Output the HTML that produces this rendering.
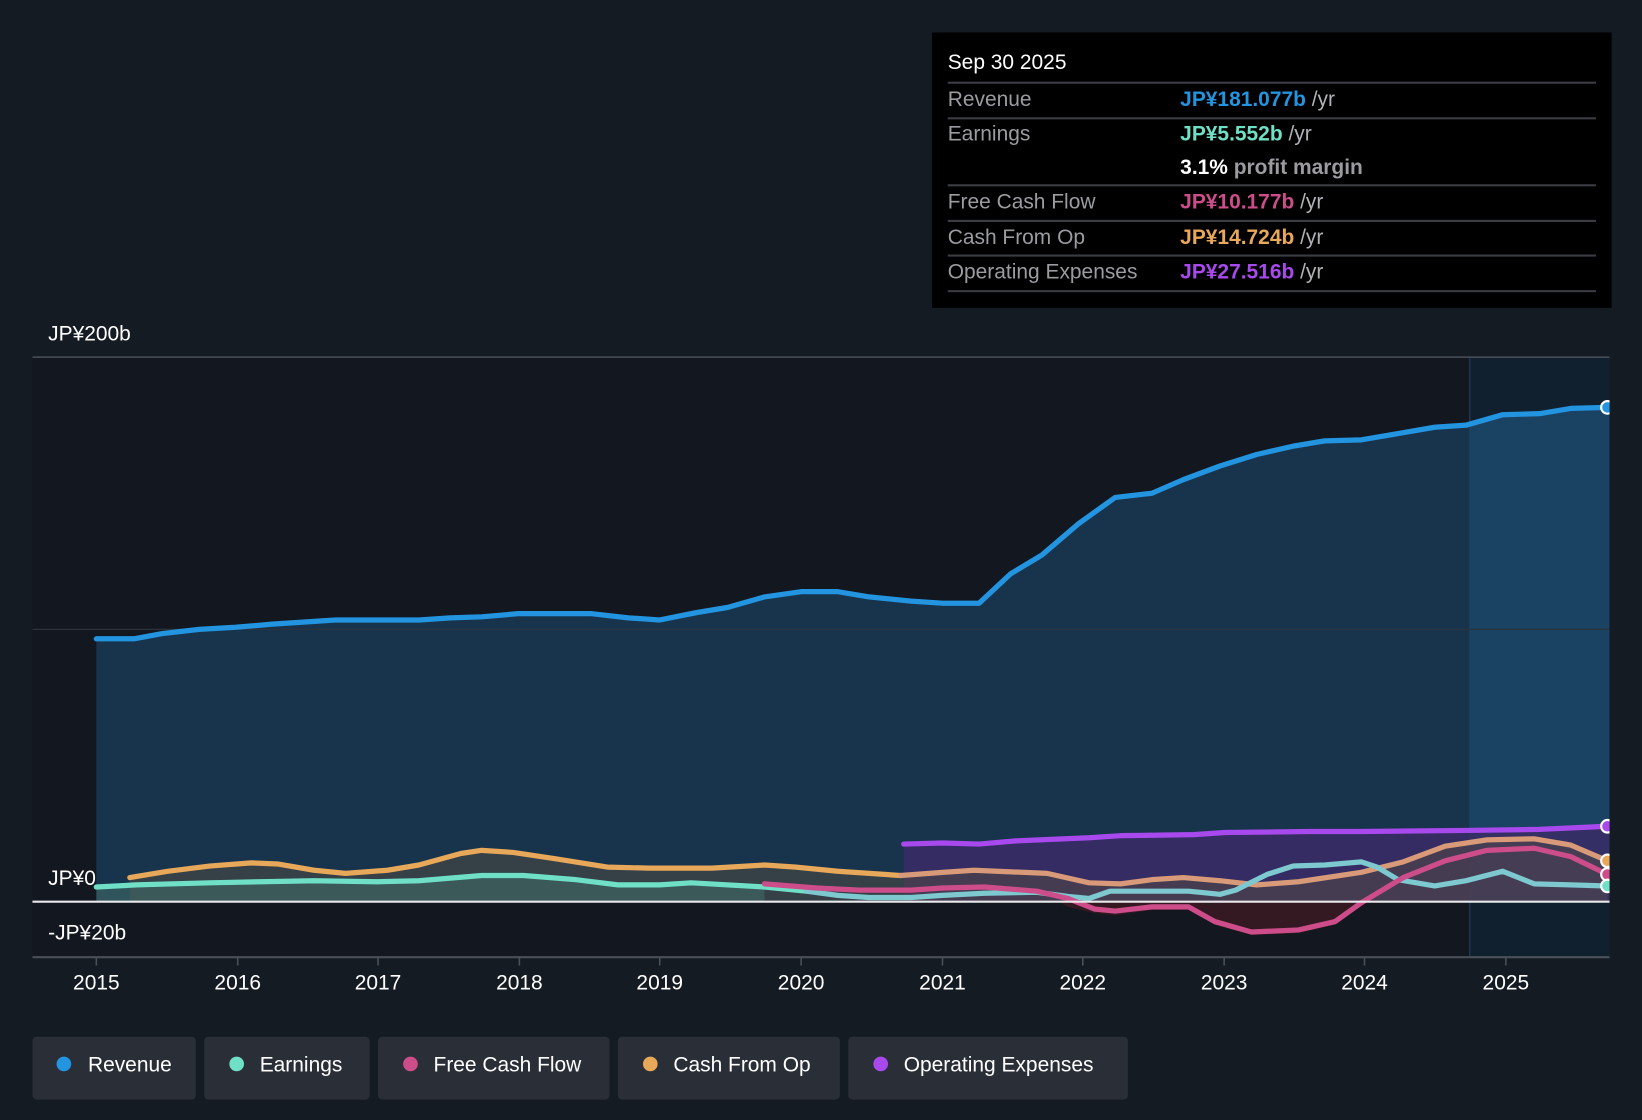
<!DOCTYPE html>
<html><head><meta charset="utf-8"><style>
html,body{margin:0;padding:0;background:#151b23;width:1642px;height:1120px;overflow:hidden}
svg{display:block}
text{font-family:"Liberation Sans",sans-serif}
</style></head><body>
<svg width="1642" height="1120" viewBox="0 0 1568 1069.5" preserveAspectRatio="none">
<defs>
<clipPath id="fc"><rect x="1403" y="330" width="134" height="600"/></clipPath>
</defs>
<rect width="1568" height="1070" fill="#151b23"/>
<!-- plot bg -->
<rect x="31" y="341" width="1506" height="573" fill="#121720"/>
<rect x="1403" y="341" width="134" height="573" fill="#10202e"/>
<line x1="1403.5" y1="341" x2="1403.5" y2="914" stroke="#1d3550" stroke-width="1.5"/>
<!-- revenue area -->
<polygon id="rev" fill="#18344d" points="92,861 92,610 128,610 155,605 190,601 225,599 260,596 320,592 400,592 430,590 460,589 495,586 565,586 600,590 630,592 665,585 695,580 730,570 765,565 800,565 830,570 870,574 900,576 935,576 965,548 995,530 1030,500 1065,475 1100,471 1130,458 1165,445 1200,434 1235,426 1265,421 1300,420 1335,414 1370,408 1400,406 1435,396 1470,395 1500,390 1535,389 1537,389 1537,861"/>
<g clip-path="url(#fc)">
<polygon fill="#1a4262" points="1370,861 1370,408 1400,406 1435,396 1470,395 1500,390 1535,389 1537,389 1537,861"/>
</g>
<!-- opex area -->
<polygon fill="#3a2c66" opacity="0.85" points="863,861 863,806 900,805 935,806 970,803 1040,800 1070,798 1140,797 1170,795 1250,794 1300,794 1400,793 1470,792 1535,789 1537,789 1537,861"/>
<!-- cfo area -->
<polygon fill="#5a5040" opacity="0.45" points="124,861 124,838 160,832 200,827 240,824 265,825 300,831 330,834 370,831 400,826 440,815 460,812 490,814 530,820 580,828 620,829 680,829 730,826 760,828 800,832 860,836 900,833 930,831 1000,834 1040,843 1070,844 1100,840 1130,838 1165,841 1200,845 1240,842 1300,833 1340,823 1380,808 1420,802 1465,801 1500,807 1535,822 1535,861"/>
<!-- earnings area -->
<polygon fill="#3f6a66" opacity="0.6" points="92,861 92,847 130,845 200,843 300,841 360,842 400,841 460,836 500,836 550,840 590,845 630,845 660,843 730,847 730,861"/>
<!-- fcf negative area -->
<polygon fill="#3a1a22" opacity="0.9" points="1010,861 1020,866 1045,872 1065,874 1100,869 1135,869 1160,883 1195,893 1240,891 1275,883 1300,865 1305,861"/>
<!-- gridlines -->
<line x1="31" y1="341" x2="1537" y2="341" stroke="#4a505a" stroke-width="1.5"/>
<line x1="31" y1="601" x2="1537" y2="601" stroke="#2c323b" stroke-width="1.2"/>
<line x1="31" y1="914" x2="1537" y2="914" stroke="#4a505a" stroke-width="2"/>
<g stroke="#4a505a" stroke-width="1.5">
<line x1="92" y1="914" x2="92" y2="922"/><line x1="227" y1="914" x2="227" y2="922"/><line x1="361" y1="914" x2="361" y2="922"/><line x1="496" y1="914" x2="496" y2="922"/><line x1="630" y1="914" x2="630" y2="922"/><line x1="765" y1="914" x2="765" y2="922"/><line x1="900" y1="914" x2="900" y2="922"/><line x1="1034" y1="914" x2="1034" y2="922"/><line x1="1169" y1="914" x2="1169" y2="922"/><line x1="1303" y1="914" x2="1303" y2="922"/><line x1="1438" y1="914" x2="1438" y2="922"/>
</g>
<g fill="none" stroke-width="5" stroke-linejoin="round" stroke-linecap="round">
<polyline stroke="#a849ee" points="863,806 900,805 935,806 970,803 1040,800 1070,798 1140,797 1170,795 1250,794 1300,794 1400,793 1470,792 1535,789"/>
<polyline stroke="#e8a85a" points="124,838 160,832 200,827 240,824 265,825 300,831 330,834 370,831 400,826 440,815 460,812 490,814 530,820 580,828 620,829 680,829 730,826 760,828 800,832 860,836"/>
<polyline stroke="#d89a78" points="860,836 900,833 930,831 1000,834 1040,843 1070,844 1100,840 1130,838 1165,841 1200,845 1240,842 1300,833 1340,823 1380,808 1420,802 1465,801 1500,807 1535,822"/>
<polyline stroke="#6fe0c6" points="92,847 130,845 200,843 300,841 360,842 400,841 460,836 500,836 550,840 590,845 630,845 660,843 730,847 770,851"/>
<polyline stroke="#7ec8d0" points="770,851 800,855 830,857 870,857 900,855 940,853 990,852 1020,856 1040,858 1060,851 1100,851 1135,851 1165,854 1180,850 1210,835 1235,827 1265,826 1300,823 1315,828 1335,840 1370,846 1400,841 1435,832 1465,844 1500,845 1535,846"/>
<polyline stroke="#cc4d8a" points="730,844 780,848 820,850 870,850 900,848 940,847 990,851 1020,858 1045,868 1065,870 1100,866 1135,866 1160,880 1195,890 1240,888 1275,880 1300,862 1340,838 1380,822 1420,812 1465,810 1500,818 1535,835"/>
<polyline stroke="#2394e0" points="92,610 128,610 155,605 190,601 225,599 260,596 320,592 400,592 430,590 460,589 495,586 565,586 600,590 630,592 665,585 695,580 730,570 765,565 800,565 830,570 870,574 900,576 935,576 965,548 995,530 1030,500 1065,475 1100,471 1130,458 1165,445 1200,434 1235,426 1265,421 1300,420 1335,414 1370,408 1400,406 1435,396 1470,395 1500,390 1535,389"/>
</g>
<line x1="31" y1="861" x2="1537" y2="861" stroke="#e8e8ea" stroke-width="2"/>
<g stroke="#fff" stroke-width="2">
<circle cx="1535" cy="389" r="6" fill="#2394e0"/>
<circle cx="1535" cy="789" r="6" fill="#a849ee"/>
<circle cx="1535" cy="822" r="6" fill="#e8a85a"/>
<circle cx="1535" cy="835" r="6" fill="#cc4d8a"/>
<circle cx="1535" cy="846" r="6" fill="#6fe0c6"/>
</g>
<rect x="1537" y="330" width="31" height="600" fill="#151b23"/>
<!-- axis labels -->
<g fill="#fff" font-size="20">
<text x="46" y="325">JP¥200b</text>
<text x="46" y="845">JP¥0</text>
<text x="46" y="897">-JP¥20b</text>
</g>
<g fill="#fff" font-size="20" text-anchor="middle">
<text x="92" y="945">2015</text><text x="227" y="945">2016</text><text x="361" y="945">2017</text><text x="496" y="945">2018</text><text x="630" y="945">2019</text><text x="765" y="945">2020</text><text x="900" y="945">2021</text><text x="1034" y="945">2022</text><text x="1169" y="945">2023</text><text x="1303" y="945">2024</text><text x="1438" y="945">2025</text>
</g>
<!-- tooltip -->
<rect x="890" y="31" width="649" height="263" fill="#000"/>
<text x="905" y="66" fill="#fff" font-size="20">Sep 30 2025</text>
<g stroke="#3a3d42" stroke-width="2">
<line x1="905" y1="79" x2="1524" y2="79"/><line x1="905" y1="113" x2="1524" y2="113"/><line x1="905" y1="177" x2="1524" y2="177"/><line x1="905" y1="211" x2="1524" y2="211"/><line x1="905" y1="244" x2="1524" y2="244"/><line x1="905" y1="278" x2="1524" y2="278"/>
</g>
<g font-size="20" fill="#9a9ca0">
<text x="905" y="101">Revenue</text>
<text x="905" y="134">Earnings</text>
<text x="905" y="199">Free Cash Flow</text>
<text x="905" y="233">Cash From Op</text>
<text x="905" y="266">Operating Expenses</text>
</g>
<g font-size="20" font-weight="bold">
<text x="1127" y="101" fill="#2394e0">JP¥181.077b <tspan fill="#b0b2b6" font-weight="normal">/yr</tspan></text>
<text x="1127" y="134" fill="#6fe0c6">JP¥5.552b <tspan fill="#b0b2b6" font-weight="normal">/yr</tspan></text>
<text x="1127" y="166" fill="#fff">3.1% <tspan fill="#9a9ca0">profit margin</tspan></text>
<text x="1127" y="199" fill="#cc4d8a">JP¥10.177b <tspan fill="#b0b2b6" font-weight="normal">/yr</tspan></text>
<text x="1127" y="233" fill="#e8a85a">JP¥14.724b <tspan fill="#b0b2b6" font-weight="normal">/yr</tspan></text>
<text x="1127" y="266" fill="#a849ee">JP¥27.516b <tspan fill="#b0b2b6" font-weight="normal">/yr</tspan></text>
</g>
<!-- legend -->
<g fill="#2a2e37">
<rect x="31" y="990" width="156" height="60" rx="4"/>
<rect x="195" y="990" width="158" height="60" rx="4"/>
<rect x="361" y="990" width="221" height="60" rx="4"/>
<rect x="590" y="990" width="212" height="60" rx="4"/>
<rect x="810" y="990" width="267" height="60" rx="4"/>
</g>
<circle cx="61" cy="1016" r="7" fill="#2394e0"/>
<circle cx="226" cy="1016" r="7" fill="#6fe0c6"/>
<circle cx="392" cy="1016" r="7" fill="#cc4d8a"/>
<circle cx="621" cy="1016" r="7" fill="#e8a85a"/>
<circle cx="841" cy="1016" r="7" fill="#a849ee"/>
<g fill="#fff" font-size="20">
<text x="84" y="1023">Revenue</text>
<text x="248" y="1023">Earnings</text>
<text x="414" y="1023">Free Cash Flow</text>
<text x="643" y="1023">Cash From Op</text>
<text x="863" y="1023">Operating Expenses</text>
</g>
</svg>
</body></html>
